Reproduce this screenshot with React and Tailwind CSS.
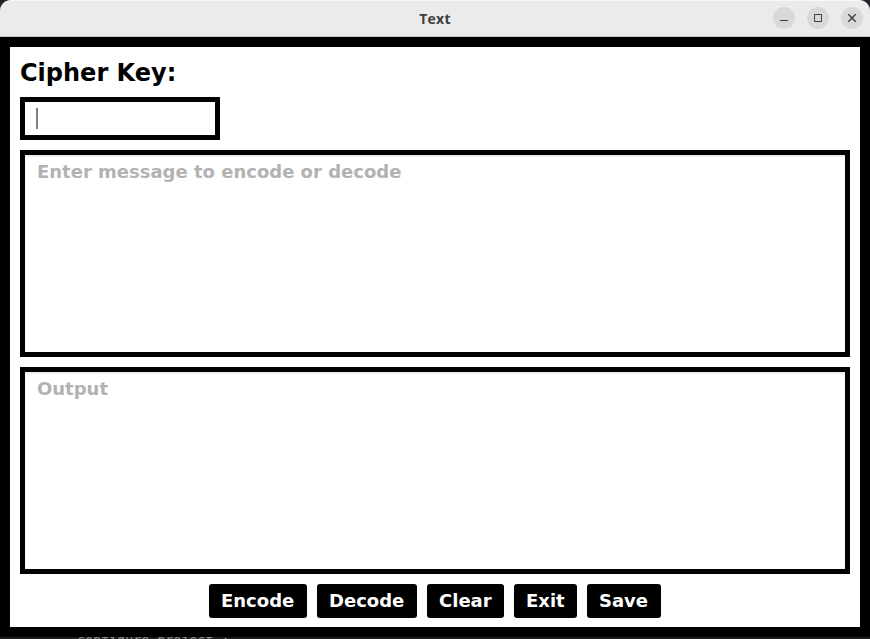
function TitleButton({ children }) {
  return (
    <button className="h-[22px] w-[22px] rounded-full bg-[#d9d9d9]">
      <svg className="block" width="22" height="22" viewBox="0 0 22 22" fill="none" stroke="#3d3d3d">
        {children}
      </svg>
    </button>
  );
}

function MessageBox({ placeholder }) {
  return (
    <div className="h-[207px] border-[5px] border-black bg-white px-3 pt-[6px] text-[18px] leading-[21px] text-[#b2b2b2] shadow-[inset_0_2px_2px_rgba(0,0,0,0.07)]">
      {placeholder}
    </div>
  );
}

export default function App() {
  return (
    <div className="h-[639px] w-[870px] overflow-hidden bg-[#242226] font-['DejaVu_Sans',sans-serif] font-bold">
      <header className="grid h-[37px] grid-cols-[1fr_auto_1fr] items-start rounded-t-[11px] border-t border-b border-t-[#f8f8f8] border-b-[#bfbfbf] bg-[#ebebeb]">
        <span />
        <h1 className="pt-[8px] font-['Open_Sans','Noto_Sans',sans-serif] text-[14px] leading-[20px] tracking-[0.25px] text-[#3d3d3d]">Text</h1>
        <div className="flex justify-end gap-3 pt-[6px] pr-[7px]">
          <TitleButton>
            <path d="M7 13.5h8" />
          </TitleButton>
          <TitleButton>
            <path d="M7.5 7.5h7v7h-7z" />
          </TitleButton>
          <TitleButton>
            <path d="M7.3 7.3l7.4 7.4M14.7 7.3l-7.4 7.4" strokeWidth="1.4" />
          </TitleButton>
        </div>
      </header>
      <main className="h-[600px] border-[10px] border-black bg-white px-[10px] pt-[11px]">
        <h2 className="mb-[9px] text-[24px] leading-[30px] text-black">Cipher Key:</h2>
        <div className="mb-[10px] flex h-[43px] w-[200px] items-center border-[5px] border-black pl-[11px]">
          <span className="h-[21px] w-[2px] bg-[#808080]" />
        </div>
        <div className="flex flex-col gap-[10px]">
          <MessageBox placeholder="Enter message to encode or decode" />
          <MessageBox placeholder="Output" />
          <div className="flex justify-center gap-[10px] text-[18px] leading-[34px] text-white">
            <button className="h-[34px] w-[98px] rounded-[3px] bg-black pl-3 text-left">Encode</button>
            <button className="h-[34px] w-[100px] rounded-[3px] bg-black pl-3 text-left">Decode</button>
            <button className="h-[34px] w-[77px] rounded-[3px] bg-black pl-3 text-left">Clear</button>
            <button className="h-[34px] w-[63px] rounded-[3px] bg-black pl-3 text-left">Exit</button>
            <button className="h-[34px] w-[74px] rounded-[3px] bg-black pl-3 text-left">Save</button>
          </div>
        </div>
      </main>
      <div className="h-[2px] overflow-hidden bg-[#1c1c1c] pl-[77px]">
        <div className="-mt-[3px] font-['DejaVu_Sans_Mono',monospace] text-[13.33px] leading-[14px] font-normal whitespace-pre text-[#909090]">
          configure project :
        </div>
      </div>
    </div>
  );
}
